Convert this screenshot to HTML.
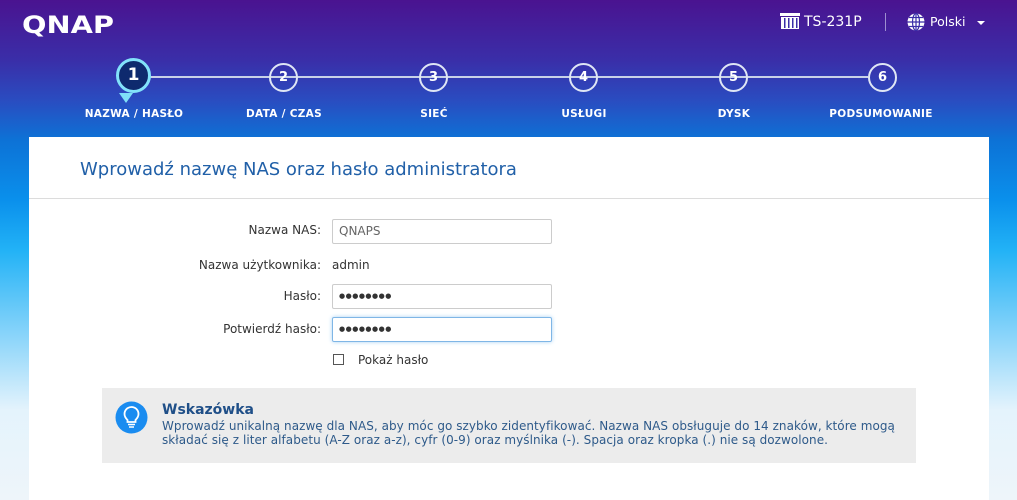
<!DOCTYPE html>
<html><head><meta charset="utf-8"><style>
*{margin:0;padding:0;box-sizing:border-box}
body{width:1017px;height:500px;overflow:hidden;position:relative;font-family:"DejaVu Sans","Liberation Sans",sans-serif;
background:linear-gradient(180deg,#4a1390 0%,#3a2ea8 12%,#2a4cc0 20%,#0d72d6 28%,#0a90ec 40%,#22b2f6 50%,#8fd6fa 68%,#e4f3fc 82%,#eef5fa 100%);}
.logo{position:absolute;left:22px;top:11px;color:#fff;font:900 24px "DejaVu Sans",sans-serif;letter-spacing:0px;transform:scaleX(1.2);transform-origin:left}
.top{position:absolute;top:12px;color:#fff;font-size:14px}
.line{position:absolute;top:76px;height:2px;background:#c8d2e8}
.c{position:absolute;top:63px;width:29px;height:29px;border:2px solid #dfe6f5;border-radius:50%;color:#fff;font:bold 13px "DejaVu Sans",sans-serif;text-align:center;line-height:25px;background:transparent}
.lab{position:absolute;top:108px;width:200px;text-align:center;color:#fff;font:bold 10.5px "DejaVu Sans",sans-serif;letter-spacing:.3px}
.panel{position:absolute;left:29px;top:137px;width:960px;height:363px;background:#fff}
.title{position:absolute;left:51px;top:22px;color:#2160a8;font-size:18px}
.sep{position:absolute;left:0;right:0;top:61px;height:1px;background:#dcdcdc}
.fl{position:absolute;right:668px;font-size:12px;color:#333;text-align:right}
.in{position:absolute;left:303px;width:220px;height:25px;border:1px solid #ccc;border-radius:2px;font-size:12px;color:#666;padding-left:6px;line-height:23px}
.dots{color:#333;font-size:7px;letter-spacing:0.5px}
.tip{position:absolute;left:73px;top:251px;width:814px;height:75px;background:#ececec}
</style></head><body>
<div class="logo">QNAP</div>
<div class="top" style="left:780px;top:11px"><svg width="20" height="20" viewBox="0 0 20 20"><rect x="0" y="2" width="20" height="3" fill="#fff"/><rect x="1" y="6" width="18" height="12" fill="#fff"/><g fill="#3a2ea8"><rect x="4" y="7" width="1.5" height="10"/><rect x="8" y="7" width="1.5" height="10"/><rect x="12" y="7" width="1.5" height="10"/><rect x="16" y="7" width="1.5" height="10"/></g></svg></div>
<div class="top" style="left:804px;top:14px">TS-231P</div>
<div style="position:absolute;left:885px;top:13px;width:1px;height:18px;background:#9d8fd0"></div>
<div class="top" style="left:906px;top:12px"><svg width="20" height="20" viewBox="0 0 20 20"><circle cx="10" cy="10" r="8.5" fill="#fff"/><g fill="none" stroke="#3a2ea8" stroke-width="1.2"><ellipse cx="10" cy="10" rx="3.5" ry="8.5"/><line x1="1.5" y1="10" x2="18.5" y2="10"/><line x1="3" y1="5.5" x2="17" y2="5.5"/><line x1="3" y1="14.5" x2="17" y2="14.5"/><line x1="10" y1="1.5" x2="10" y2="18.5"/></g></svg></div>
<div class="top" style="left:930px;top:14px;font-size:12.5px">Polski</div>
<div style="position:absolute;left:977px;top:21px;border:4px solid transparent;border-top-color:#fff"></div>

<div class="line" style="left:148px;width:720px"></div>
<div style="position:absolute;left:119px;top:93px;width:0;height:0;border:7px solid transparent;border-top:10px solid #7fe0f8;border-bottom:0"></div>
<div class="c" style="left:116px;top:58px;width:35px;height:35px;border:3px solid #82e2fa;background:#0e2a6e;line-height:29px;font-size:17px">1</div>
<div class="c" style="left:269px">2</div>
<div class="c" style="left:419px">3</div>
<div class="c" style="left:569px">4</div>
<div class="c" style="left:719px">5</div>
<div class="c" style="left:868px">6</div>
<div class="lab" style="left:34px">NAZWA / HASŁO</div>
<div class="lab" style="left:184px">DATA / CZAS</div>
<div class="lab" style="left:334px">SIEĆ</div>
<div class="lab" style="left:484px">USŁUGI</div>
<div class="lab" style="left:634px">DYSK</div>
<div class="lab" style="left:781px">PODSUMOWANIE</div>

<div class="panel">
<div class="title">Wprowadź nazwę NAS oraz hasło administratora</div>
<div class="sep"></div>
<div class="fl" style="top:86px">Nazwa NAS:</div>
<div class="in" style="top:82px">QNAPS</div>
<div class="fl" style="top:121px">Nazwa użytkownika:</div>
<div style="position:absolute;left:303px;top:121px;font-size:12px;color:#333">admin</div>
<div class="fl" style="top:152px">Hasło:</div>
<div class="in dots" style="top:147px">●●●●●●●●</div>
<div class="fl" style="top:185px">Potwierdź hasło:</div>
<div class="in dots" style="top:180px;border-color:#7fb6e6;box-shadow:0 0 4px #a8d2f4">●●●●●●●●</div>
<div style="position:absolute;left:304px;top:217px;width:11px;height:11px;border:1px solid #555"></div>
<div style="position:absolute;left:329px;top:216px;font-size:12px;color:#333">Pokaż hasło</div>
<div class="tip">
<svg style="position:absolute;left:13px;top:13px" width="33" height="33" viewBox="0 0 33 33"><circle cx="16.5" cy="16.5" r="16" fill="#1a8cf0"/><path d="M12.5 19c-2-2-3-3.5-3-6a7 7 0 0 1 14 0c0 2.5-1 4-3 6v2h-8z" fill="none" stroke="#fff" stroke-width="1.8"/><line x1="13" y1="23.5" x2="20" y2="23.5" stroke="#fff" stroke-width="1.5"/><line x1="14" y1="26" x2="19" y2="26" stroke="#fff" stroke-width="1.5"/></svg>
<div style="position:absolute;left:60px;top:14px;font-size:14px;font-weight:bold;color:#1f4f88">Wskazówka</div>
<div style="position:absolute;left:60px;top:31px;font-size:12px;line-height:14px;color:#2e5a8a;width:745px;letter-spacing:0.05px">Wprowadź unikalną nazwę dla NAS, aby móc go szybko zidentyfikować. Nazwa NAS obsługuje do 14 znaków, które mogą składać się z liter alfabetu (A-Z oraz a-z), cyfr (0-9) oraz myślnika (-). Spacja oraz kropka (.) nie są dozwolone.</div>
</div>
</div>
</body></html>
